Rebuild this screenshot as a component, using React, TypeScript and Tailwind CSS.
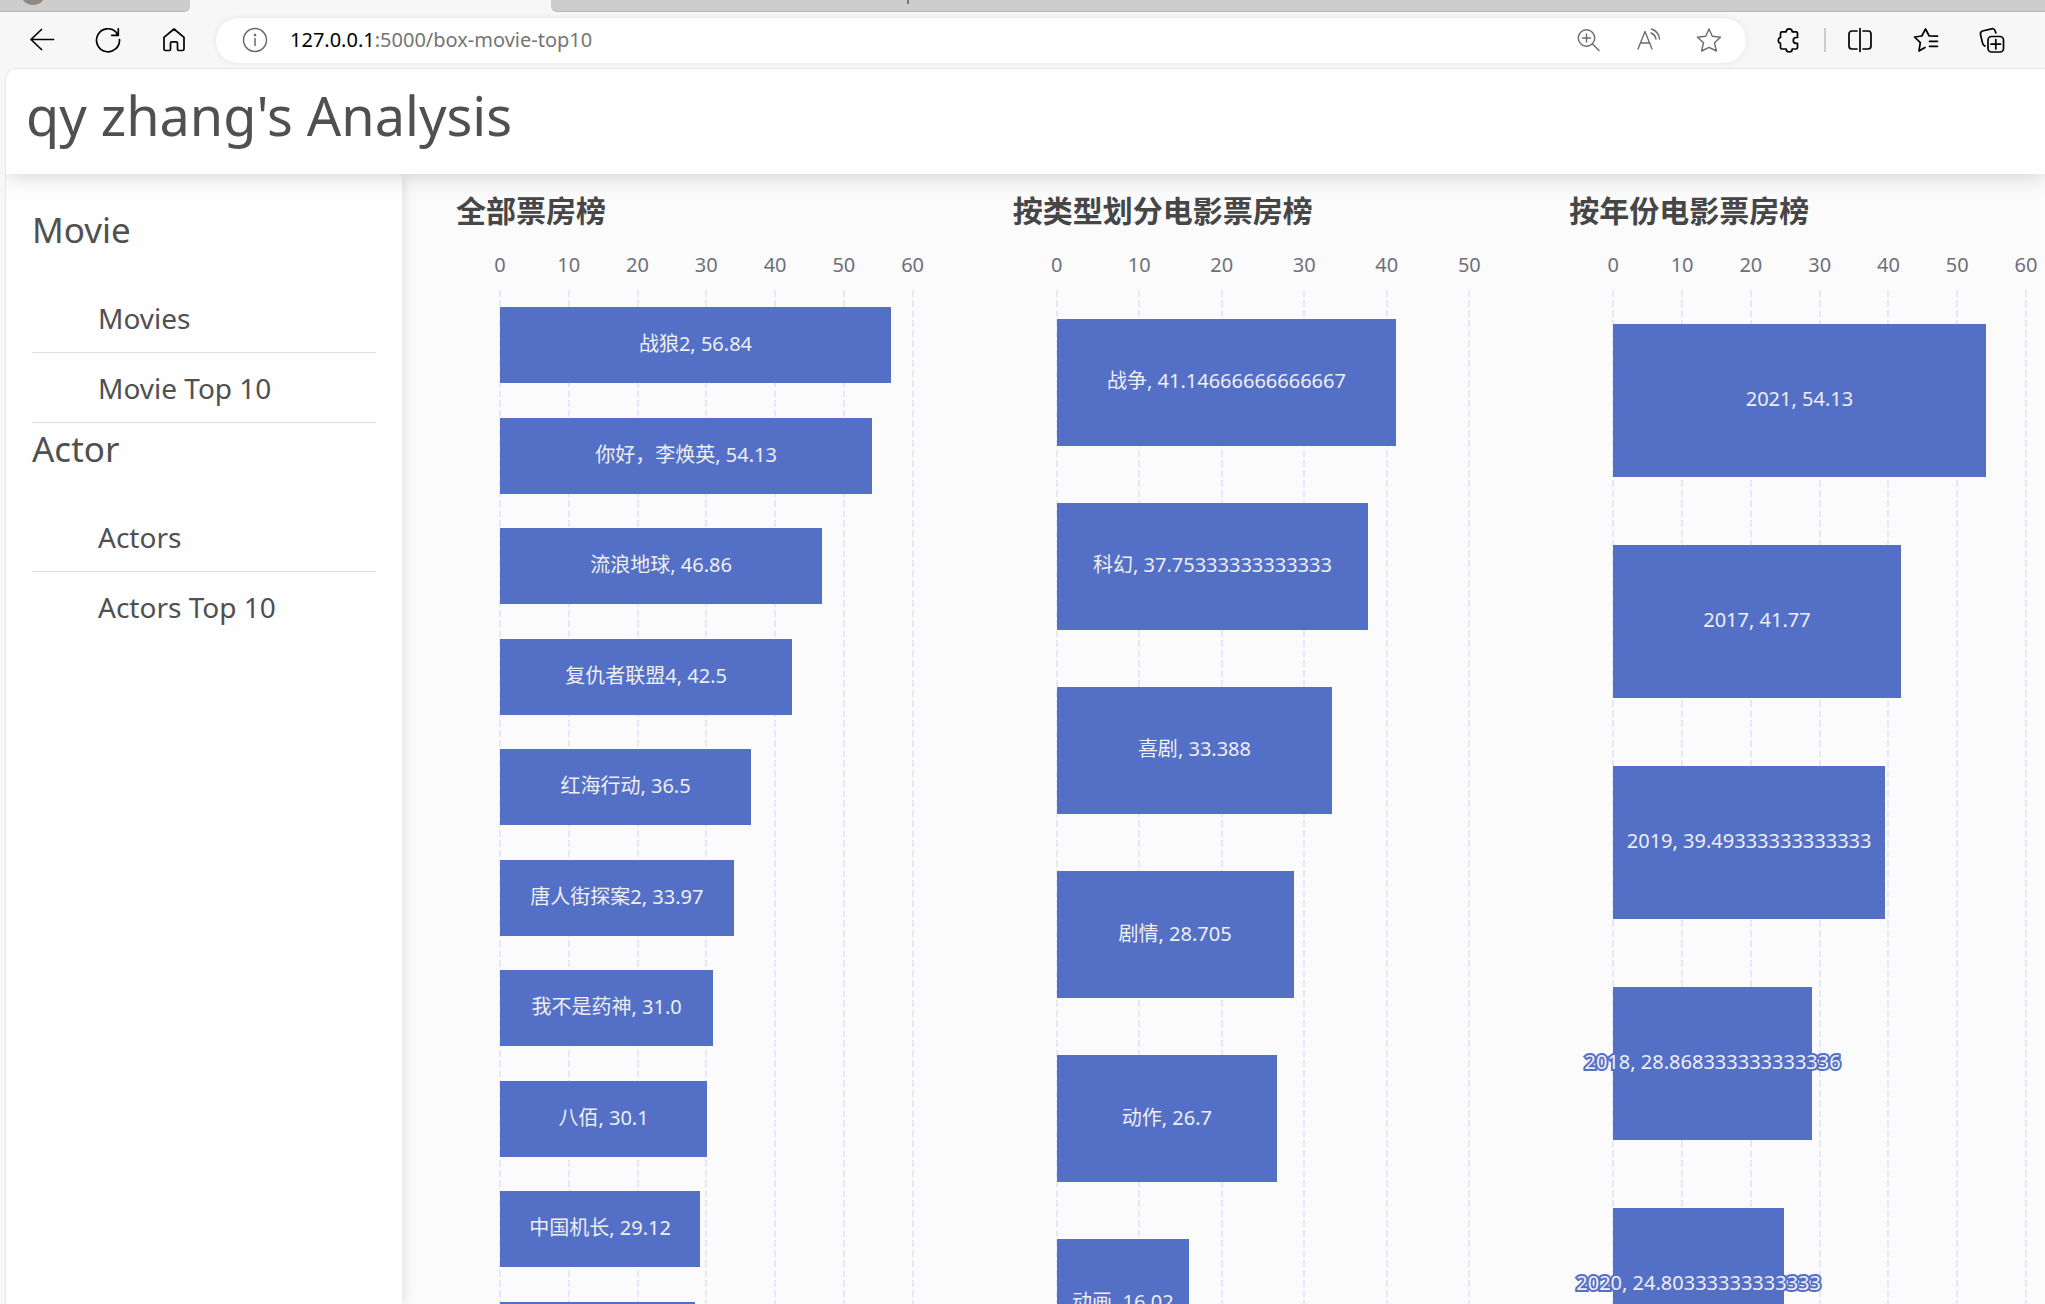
import React from "react";

type Datum = { name?: string; value: string };
type Chart = { title: string; max: number; data: Datum[] };

const charts: Chart[] = [
  {
    title: "全部票房榜",
    max: 60,
    data: [
      { name: "战狼2", value: "56.84" },
      { name: "你好，李焕英", value: "54.13" },
      { name: "流浪地球", value: "46.86" },
      { name: "复仇者联盟4", value: "42.5" },
      { name: "红海行动", value: "36.5" },
      { name: "唐人街探案2", value: "33.97" },
      { name: "我不是药神", value: "31.0" },
      { name: "八佰", value: "30.1" },
      { name: "中国机长", value: "29.12" },
      { value: "28.3" },
    ],
  },
  {
    title: "按类型划分电影票房榜",
    max: 50,
    data: [
      { name: "战争", value: "41.14666666666667" },
      { name: "科幻", value: "37.75333333333333" },
      { name: "喜剧", value: "33.388" },
      { name: "剧情", value: "28.705" },
      { name: "动作", value: "26.7" },
      { name: "动画", value: "16.02" },
    ],
  },
  {
    title: "按年份电影票房榜",
    max: 60,
    data: [
      { name: "2021", value: "54.13" },
      { name: "2017", value: "41.77" },
      { name: "2019", value: "39.49333333333333" },
      { name: "2018", value: "28.868333333333336" },
      { name: "2020", value: "24.80333333333333" },
    ],
  },
];

const menu = [
  { heading: "Movie", items: ["Movies", "Movie Top 10"] },
  { heading: "Actor", items: ["Actors", "Actors Top 10"] },
];

function Icon({ children, width = 1.7 }: { children: React.ReactNode; width?: number }) {
  return (
    <svg
      viewBox="0 0 28 28"
      className="size-7"
      fill="none"
      stroke="currentColor"
      strokeWidth={width}
      strokeLinecap="round"
      strokeLinejoin="round"
      aria-hidden="true"
    >
      {children}
    </svg>
  );
}

function IconButton({ label, children }: { label: string; children: React.ReactNode }) {
  return (
    <button type="button" aria-label={label} className="flex size-7 shrink-0 items-center justify-center">
      {children}
    </button>
  );
}

function BrowserBar() {
  return (
    <div className="shrink-0 bg-[#f7f7f7]">
      <div className="flex h-3 justify-between">
        <div className="flex w-[190px] overflow-hidden rounded-br-md border-b border-[#b8b8b8] bg-[#cdcdcd] pl-5">
          <div className="-mt-[21px] size-[26px] shrink-0 rounded-full bg-[#8f8883]" />
        </div>
        <div className="ml-[361px] flex flex-1 rounded-bl-md border-b border-[#b8b8b8] bg-[#cdcdcd] pl-[356px]">
          <div className="h-1 w-0.5 bg-[#777777]" />
        </div>
      </div>
      <div className="flex h-14 items-center pr-[39px] pl-7 text-black">
        <div className="flex gap-[38px]">
          <IconButton label="Back">
            <Icon>
              <path d="M25.500 13.500H3M13.500 3.500 3 13.500l10.500 10" />
            </Icon>
          </IconButton>
          <IconButton label="Refresh">
            <Icon>
              <path d="M25.500 13.500A11.500 11.500 0 1 1 22 6l1.500 2.800M24.300 2.800v6.500h-6.500" />
            </Icon>
          </IconButton>
          <IconButton label="Home">
            <Icon>
              <path d="M4 11.300 14 3l10 8.300V23a1.500 1.500 0 0 1-1.500 1.500h-3.800a1.200 1.200 0 0 1-1.200-1.200v-6a1.500 1.500 0 0 0-1.500-1.500h-4a1.500 1.500 0 0 0-1.500 1.500v6a1.200 1.200 0 0 1-1.200 1.200H5.500A1.500 1.500 0 0 1 4 23z" />
            </Icon>
          </IconButton>
        </div>
        <div className="ml-7 flex h-[45px] flex-1 items-center rounded-full bg-white pr-[23px] pl-[25px] text-[#6b6b6b] shadow-[0_0_6px_rgba(0,0,0,0.08)]">
          <IconButton label="Site information">
            <Icon width={1.5}>
              <circle cx="14" cy="14" r="11.500" />
              <path d="M14 12.500v7" />
              <circle cx="14" cy="9" r="0.600" fill="currentColor" />
            </Icon>
          </IconButton>
          <a href="#address" className="ml-[21px] flex-1 text-xl text-[#757575]">
            <span className="text-black">127.0.0.1</span>:5000/box-movie-top10
          </a>
          <div className="flex gap-8">
            <IconButton label="Zoom">
              <Icon width={1.4}>
                <circle cx="11.500" cy="12" r="8.200" />
                <path d="m17.500 18 6.500 6.500M11.500 8v8M7.500 12h8" />
              </Icon>
            </IconButton>
            <IconButton label="Read aloud">
              <Icon width={1.4}>
                <path d="M3 23 10 5.500 17 23M5.800 17h8.400M16.500 3c4.500 1.500 7.500 5.500 8 10M16 7c2.500 1 4.500 3.500 5 6" />
              </Icon>
            </IconButton>
            <IconButton label="Add to favorites">
              <Icon width={1.4}>
                <path d="M14 3l3.300 7.200 8.200 1-6 5.600 1.900 8.200L14 21.300 6.600 25l1.900-8.200-6-5.600 8.200-1z" />
              </Icon>
            </IconButton>
          </div>
        </div>
        <div className="ml-7 flex items-center">
          <IconButton label="Extensions">
            <Icon>
              <path d="M8 5.800h4.200a3 3 0 0 1 6 0H22a1.500 1.500 0 0 1 1.500 1.500v4.200h-1.300a2.900 2.900 0 0 0 0 5.800h1.300v4.200A1.500 1.500 0 0 1 22 23h-3.800a3 3 0 0 1-6 0H8a1.500 1.500 0 0 1-1.500-1.500v-4.200a3 3 0 0 1 0-5.800V7.300A1.500 1.500 0 0 1 8 5.800z" />
            </Icon>
          </IconButton>
          <div className="ml-[22px] h-6 w-0.5 bg-[#cccccc]" />
          <div className="ml-5 flex gap-[38px]">
            <IconButton label="Split screen">
              <Icon>
                <path d="M11 5H6a3 3 0 0 0-3 3v12a3 3 0 0 0 3 3h5M17 5h5a3 3 0 0 1 3 3v12a3 3 0 0 1-3 3h-5M14 2.500v23" />
              </Icon>
            </IconButton>
            <IconButton label="Favorites">
              <Icon>
                <path d="M13 21.500 7 25l1.300-8.300L2.500 11l7.300-1L13.500 3l3.700 7 8.300.200M17.500 15.300h8M17.500 20.300h8" />
              </Icon>
            </IconButton>
            <IconButton label="Collections">
              <Icon>
                <rect x="10" y="10.500" width="15.500" height="15.500" rx="3.500" />
                <path d="M17.800 13.500v9.500M13 18.200h9.500M7 20l-1-.600a4 4 0 0 1-1.500-2.500L2.500 8.500a3 3 0 0 1 2-3.500l9-2.200a3 3 0 0 1 3.700 2.200l.600 2" />
              </Icon>
            </IconButton>
          </div>
        </div>
      </div>
    </div>
  );
}

function Sidebar() {
  return (
    <nav className="z-10 w-[396px] shrink-0 bg-[#fefefe] pt-[30px] pr-[26px] pl-[26px] text-[#505050] shadow-[0_0_14px_rgba(0,0,0,0.14)]">
      {menu.map((group, g) => (
        <section key={group.heading}>
          <h2 className="h-[79px] text-[35px] leading-[52px]">{group.heading}</h2>
          <ul>
            {group.items.map((item, i) => (
              <li
                key={item}
                className={
                  g === menu.length - 1 && i === group.items.length - 1
                    ? "h-[70px]"
                    : "h-[70px] border-b border-[#dedede]"
                }
              >
                <a href="#menu" className="flex h-full items-center pl-[66px] text-[28px]">
                  {item}
                </a>
              </li>
            ))}
          </ul>
        </section>
      ))}
    </nav>
  );
}

function BarChart({ chart }: { chart: Chart }) {
  const ticks = Array.from({ length: chart.max / 10 + 1 }, (_, i) => i * 10);
  return (
    <section className="min-w-0">
      <h3 className="h-[52px] text-[30px] leading-[50px] font-bold whitespace-nowrap text-[#464646]">
        {chart.title}
      </h3>
      <div className="ml-11">
        <div className="flex h-[52px] justify-between text-xl leading-[54px] text-[#6e7079]">
          {ticks.map((t) => (
            <span key={t} className="flex w-0 justify-center">
              {t}
            </span>
          ))}
        </div>
        <div className="relative h-[1105px]">
          <div className="absolute inset-0 flex justify-between">
            {ticks.map((t) => (
              <div key={t} className="flex w-0 justify-center">
                <div className="w-0.5 shrink-0 bg-[repeating-linear-gradient(to_bottom,#e4e9f4_0px,#e4e9f4_7px,transparent_7px,transparent_10px)]" />
              </div>
            ))}
          </div>
          <ul className="relative flex h-full flex-col">
            {chart.data.map((d) => {
              const outlined = Number(d.value) < 30 && d.value.length > 10;
              return (
                <li key={d.value} className="flex flex-1 items-center">
                  <div
                    className="flex h-[69%] items-center justify-center bg-[#5470c6] pb-0.5 text-xl text-[#eeeeee]"
                    style={{ width: `${(Number(d.value) / chart.max) * 100}%` }}
                  >
                    {d.name && (
                      <span
                        className={
                          outlined
                            ? "whitespace-nowrap [-webkit-text-stroke:4px_#5470c6] [paint-order:stroke_fill]"
                            : "whitespace-nowrap"
                        }
                      >
                        {d.name}, {d.value}
                      </span>
                    )}
                  </div>
                </li>
              );
            })}
          </ul>
        </div>
      </div>
    </section>
  );
}

export default function App() {
  return (
    <div
      lang="zh-CN"
      className="flex h-screen flex-col overflow-hidden bg-[#f7f7f7] font-['Noto_Sans','Noto_Sans_CJK_SC',sans-serif]"
    >
      <BrowserBar />
      <div className="ml-[5px] flex min-h-0 flex-1 flex-col overflow-hidden rounded-tl-xl border-t border-l border-[#e6e6e6] bg-[#fbfbfb]">
        <header className="z-20 h-[105px] shrink-0 bg-white pl-5 text-[#505050] shadow-[0_0_22px_rgba(0,0,0,0.2)]">
          <h1 className="text-[54px] leading-[92px]">qy zhang's Analysis</h1>
        </header>
        <div className="flex min-h-0 flex-1 overflow-hidden">
          <Sidebar />
          <main className="grid flex-1 grid-cols-3 gap-[100px] pt-3 pr-[19px] pl-[54px]">
            {charts.map((c) => (
              <BarChart key={c.title} chart={c} />
            ))}
          </main>
        </div>
      </div>
    </div>
  );
}
